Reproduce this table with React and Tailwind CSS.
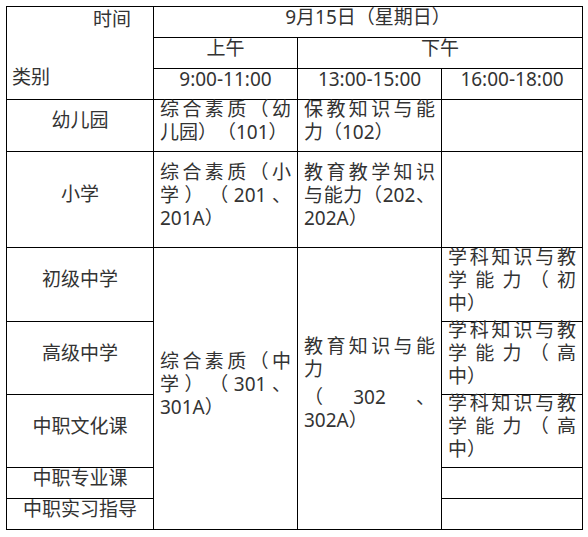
export default function App() {
  const cell = "bg-white flex";
  const center = "bg-white flex items-center justify-center text-center pb-[10px]";
  const txt = "bg-white flex items-center px-[6px] pb-[9px] text-justify";
  return (
    <div className="p-[6px] bg-white min-h-screen" style={{ fontFamily: '"Noto Sans", "Noto Sans CJK SC", sans-serif' }}>
      <div className="grid w-fit bg-black gap-px p-px text-[19px] leading-[23px] text-[#333] [text-spacing-trim:space-all] grid-cols-[146px_143px_143px_140px] grid-rows-[30px_30px_30px_51px_95px_73px_72px_72px_30px_30px]">
        <div className="bg-white row-span-3 flex flex-col justify-between pt-[1px] pb-[10px]">
          <div className="text-right pr-[22px]">时间</div>
          <div className="pl-[5px]">类别</div>
        </div>
        <div className={`${center} col-span-3`}>9月15日（星期日）</div>
        <div className={center}>上午</div>
        <div className={`${center} col-span-2`}>下午</div>
        <div className={center}>9:00-11:00</div>
        <div className={center}>13:00-15:00</div>
        <div className={center}>16:00-18:00</div>

        <div className={center}>幼儿园</div>
        <div className={txt}><div className="w-full">综合素质（幼儿园）（101）</div></div>
        <div className={txt}><div className="w-full">保教知识与能力（102）</div></div>
        <div className={cell}></div>

        <div className={center}>小学</div>
        <div className={txt}><div className="w-full">综合素质（小学）（201、201A）</div></div>
        <div className={txt}><div className="w-full">教育教学知识与能力（202、202A）</div></div>
        <div className={cell}></div>

        <div className={center}>初级中学</div>
        <div className={`${txt} row-span-5 pb-[8px]`}><div className="w-full">综合素质（中学）（301、301A）</div></div>
        <div className={`${txt} row-span-5 pb-[10px]`}>
          <div className="w-full">
            <div>教育知识与能力</div>
            <div className="mt-[5px]">（302、302A）</div>
          </div>
        </div>
        <div className={txt}><div className="w-full">学科知识与教学能力（初中）</div></div>

        <div className={center}>高级中学</div>
        <div className={txt}><div className="w-full">学科知识与教学能力（高中）</div></div>

        <div className={center}>中职文化课</div>
        <div className={txt}><div className="w-full">学科知识与教学能力（高中）</div></div>

        <div className={center}>中职专业课</div>
        <div className={cell}></div>

        <div className={center}>中职实习指导</div>
        <div className={cell}></div>
      </div>
    </div>
  );
}
